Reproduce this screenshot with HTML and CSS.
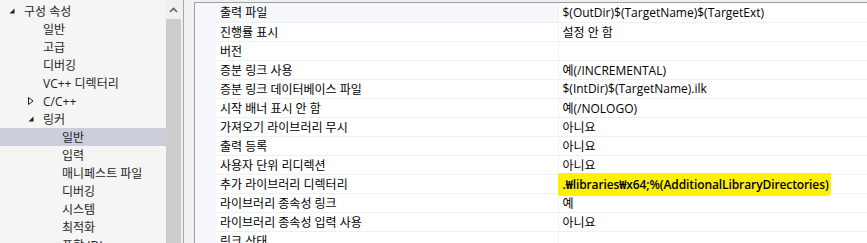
FILE: index.html
```html
<!DOCTYPE html>
<html lang="ko">
<head>
  <meta charset="UTF-8">
  <title>링커 - 일반</title>
  <link rel="stylesheet" href="styles.css">
</head>
<body>
  <div class="window">
    <!-- 왼쪽: 구성 속성 트리 -->
    <div class="left-pane">
      <ul class="tree">
        <li class="node lvl0"><span class="twisty"><svg width="6" height="6" viewBox="0 0 6 6"><path d="M5.5 0.5V5.5H0.5Z" fill="#1e1e1e"/></svg></span>구성 속성</li>
        <li class="node lvl1"><span class="twisty"></span>일반</li>
        <li class="node lvl1"><span class="twisty"></span>고급</li>
        <li class="node lvl1"><span class="twisty"></span>디버깅</li>
        <li class="node lvl1"><span class="twisty"></span>VC++ 디렉터리</li>
        <li class="node lvl1"><span class="twisty"><svg width="6" height="8" viewBox="0 0 6 8"><path d="M0.5 0.5L5 4L0.5 7.5Z" fill="none" stroke="#1e1e1e" stroke-width="1"/></svg></span>C/C++</li>
        <li class="node lvl1"><span class="twisty"><svg width="6" height="6" viewBox="0 0 6 6"><path d="M5.5 0.5V5.5H0.5Z" fill="#1e1e1e"/></svg></span>링커</li>
        <li class="node lvl2 selected"><span class="twisty"></span>일반</li>
        <li class="node lvl2"><span class="twisty"></span>입력</li>
        <li class="node lvl2"><span class="twisty"></span>매니페스트 파일</li>
        <li class="node lvl2"><span class="twisty"></span>디버깅</li>
        <li class="node lvl2"><span class="twisty"></span>시스템</li>
        <li class="node lvl2"><span class="twisty"></span>최적화</li>
        <li class="node lvl2"><span class="twisty"></span>포함 IDL</li>
      </ul>
      <div class="vscroll">
        <div class="scroll-btn">
          <svg width="9" height="6" viewBox="0 0 9 6"><path d="M1 5L4.5 1.5L8 5" fill="none" stroke="#606060" stroke-width="1.6"/></svg>
        </div>
        <div class="thumb"></div>
      </div>
    </div>

    <!-- 오른쪽: 속성 표 -->
    <div class="right-pane">
      <div class="gutter"></div>
      <table class="props">
        <tr class="hover"><td class="name">출력 파일</td><td class="value">$(OutDir)$(TargetName)$(TargetExt)</td></tr>
        <tr><td class="name">진행률 표시</td><td class="value">설정 안 함</td></tr>
        <tr><td class="name">버전</td><td class="value"></td></tr>
        <tr><td class="name">증분 링크 사용</td><td class="value">예(/INCREMENTAL)</td></tr>
        <tr><td class="name">증분 링크 데이터베이스 파일</td><td class="value">$(IntDir)$(TargetName).ilk</td></tr>
        <tr><td class="name">시작 배너 표시 안 함</td><td class="value">예(/NOLOGO)</td></tr>
        <tr><td class="name">가져오기 라이브러리 무시</td><td class="value">아니요</td></tr>
        <tr><td class="name">출력 등록</td><td class="value">아니요</td></tr>
        <tr><td class="name">사용자 단위 리디렉션</td><td class="value">아니요</td></tr>
        <tr><td class="name">추가 라이브러리 디렉터리</td><td class="value"><span class="marked">.₩libraries₩x64;%(AdditionalLibraryDirectories)</span></td></tr>
        <tr><td class="name">라이브러리 종속성 링크</td><td class="value">예</td></tr>
        <tr><td class="name">라이브러리 종속성 입력 사용</td><td class="value">아니요</td></tr>
        <tr><td class="name">링크 상태</td><td class="value"></td></tr>
      </table>
    </div>
  </div>
</body>
</html>
```

FILE: styles.css
```css
/* 기본 */
* {
  margin: 0;
  padding: 0;
  box-sizing: border-box;
}
body {
  font-family: "Open Sans", "Noto Sans CJK KR", sans-serif;
  font-size: 12px;
  color: #1e1e1e;
  background: #f0f0f0;
  overflow: hidden;
}

.window {
  display: flex;
  height: 243px;
}

/* 왼쪽 트리 */
.left-pane {
  display: flex;
  width: 184px;
  border-right: 1px solid #a8a8a8;
  background: #f5f5f5;
}
.tree {
  list-style: none;
  width: 166px;
  padding-top: 2px;
}
.node {
  display: flex;
  align-items: center;
  height: 18px;
  white-space: nowrap;
}
.node.lvl0 { padding-left: 9px; }
.node.lvl1 { padding-left: 28px; }
.node.lvl2 { padding-left: 47px; }
.node.selected {
  background: #cccedb;
}
.twisty {
  display: inline-flex;
  align-items: center;
  width: 15px;
  height: 18px;
}

/* 세로 스크롤바 */
.vscroll {
  width: 17px;
  background: #f0f0f0;
  display: flex;
  flex-direction: column;
}
.scroll-btn {
  height: 19px;
  display: flex;
  justify-content: center;
  align-items: center;
  padding-right: 2px;
}
.thumb {
  flex: 1;
  width: 15px;
  background: #cdcdcd;
}

/* 오른쪽 속성 표 */
.right-pane {
  flex: 1;
  display: flex;
  margin-left: 10px;
  margin-top: 2px;
  border-top: 1px solid #a0a0a0;
  border-left: 1px solid #a0a0a0;
  background: #fff;
}
.gutter {
  width: 21px;
  background: #f5f7fc;
}
.props {
  flex: 1;
  border-collapse: collapse;
  align-self: flex-start;
}
.props td {
  height: 19px;
  padding: 0 4px;
  border-bottom: 1px solid #f0f0f4;
  white-space: nowrap;
  color: #000;
}
.props td.name {
  width: 342px;
  border-right: 1px solid #f0f0f4;
}
.props tr.hover td.name {
  background: #f5f7fc;
}

/* 형광펜 표시 */
.marked {
  font-weight: 600;
  letter-spacing: -0.1px;
  background: #fff200;
  margin-left: -5px;
  padding: 3px 2px 3px 5px;
  border-radius: 3px 1px 4px 2px;
}
```
